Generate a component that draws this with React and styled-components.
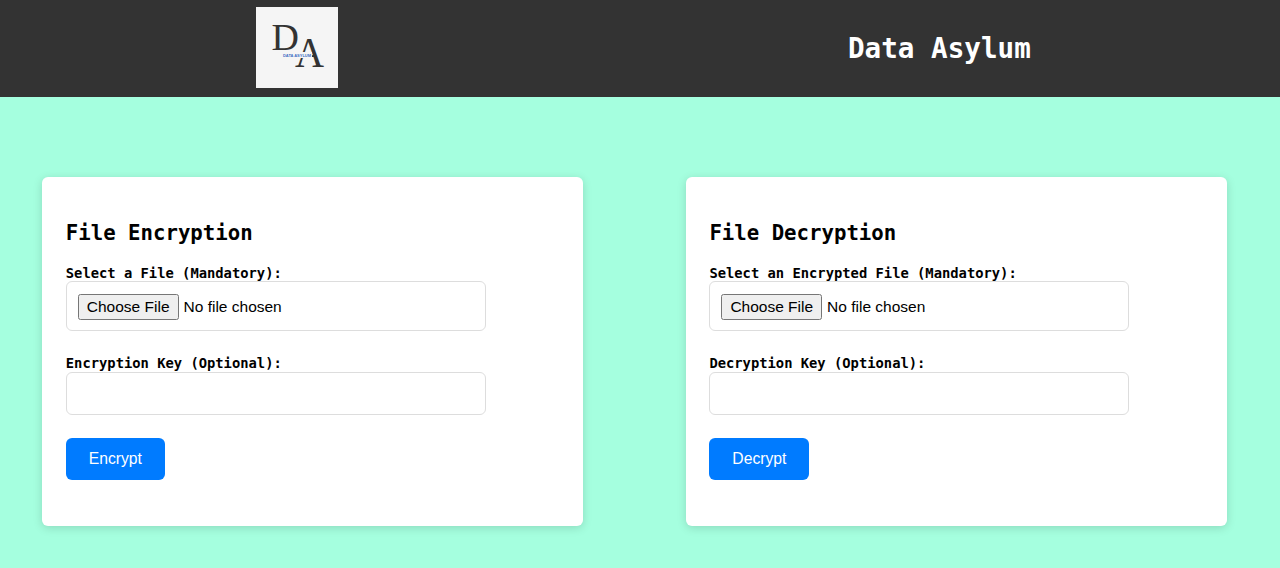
import React from "react";
import styled, { createGlobalStyle } from "styled-components";

const GlobalStyle = createGlobalStyle`
  html, body {
    margin: 0;
    padding: 0;
  }
  body {
    background: #a5ffdf;
    font-family: "Liberation Sans", Arial, sans-serif;
    min-height: 568px;
    overflow: hidden;
  }
`;

const Header = styled.header`
  display: flex;
  align-items: center;
  height: 97px;
  padding-left: 256px;
  background: #333333;
  color: #ffffff;
`;

const Logo = styled.svg`
  display: block;
  width: 82px;
  height: 81px;
  margin-bottom: 2px;
`;

const SiteTitle = styled.h1`
  margin: 0 0 0 510px;
  font-family: "DejaVu Sans Mono", monospace;
  font-size: 27.6px;
  font-weight: 700;
`;

const Main = styled.main`
  display: flex;
  gap: 102.6px;
  padding: 80px 0 0 42px;
`;

const Card = styled.section`
  box-sizing: border-box;
  width: 541px;
  height: 349px;
  padding: 44px 24px 0 23.8px;
  background: #ffffff;
  border-radius: 6px;
  box-shadow: 0 2px 10px rgba(0, 0, 0, 0.15);
`;

const CardTitle = styled.h2`
  margin: 0 0 17px;
  height: 25px;
  line-height: 25px;
  font-family: "DejaVu Sans Mono", monospace;
  font-size: 20.7px;
  font-weight: 700;
  color: #000000;
`;

const Label = styled.label`
  display: block;
  height: 18px;
  line-height: 20px;
  font-family: "DejaVu Sans Mono", monospace;
  font-size: 13.8px;
  font-weight: 700;
  color: #000000;
`;

const FileInput = styled.input`
  display: block;
  box-sizing: border-box;
  width: 420px;
  height: 50px;
  margin: 0 0 22px;
  padding: 12px 11px;
  background: #ffffff;
  border: 1px solid #dddddd;
  border-radius: 6px;
  font-family: "Liberation Sans", Arial, sans-serif;
  font-size: 15.5px;
  color: #000000;

  &::file-selector-button {
    padding: 2px 7px;
    margin-right: 5px;
  }
`;

const KeyInput = styled.input`
  display: block;
  box-sizing: border-box;
  width: 420px;
  height: 43px;
  margin: 1px 0 23px;
  padding: 12px;
  background: #ffffff;
  border: 1px solid #dddddd;
  border-radius: 6px;
  font-size: 16px;
`;

const Submit = styled.button`
  display: block;
  width: ${(p) => p.$width}px;
  height: 42px;
  padding: 0;
  border: none;
  border-radius: 6px;
  background: #007bff;
  color: #ffffff;
  font-family: "Liberation Sans", Arial, sans-serif;
  font-size: 15.7px;
`;

function BrandMark() {
  return (
    <Logo viewBox="0 0 82 81">
      <rect width="82" height="81" fill="#f5f5f5" />
      <text x="15.5" y="43" fontFamily="Liberation Serif, serif" fontSize="38" fill="#333333">
        D
      </text>
      <text
        x="39"
        y="60"
        fontFamily="Liberation Serif, serif"
        fontSize="43"
        fill="#333333"
        textLength="29"
        lengthAdjust="spacingAndGlyphs"
      >
        A
      </text>
      <rect x="26" y="45" width="30" height="6" fill="#f5f5f5" />
      <text
        x="27"
        y="50"
        fontFamily="Liberation Sans, sans-serif"
        fontSize="4.4"
        fontWeight="700"
        fill="#3f6fc4"
        textLength="28"
        lengthAdjust="spacingAndGlyphs"
      >
        DATA ASYLUM
      </text>
    </Logo>
  );
}

function ToolCard({ title, fileLabel, keyLabel, action, actionWidth }) {
  return (
    <Card>
      <CardTitle>{title}</CardTitle>
      <Label>{fileLabel}</Label>
      <FileInput type="file" />
      <Label>{keyLabel}</Label>
      <KeyInput type="text" />
      <Submit type="button" $width={actionWidth}>
        {action}
      </Submit>
    </Card>
  );
}

export default function App() {
  return (
    <>
      <GlobalStyle />
      <Header>
        <BrandMark />
        <SiteTitle>Data Asylum</SiteTitle>
      </Header>
      <Main>
        <ToolCard
          title="File Encryption"
          fileLabel="Select a File (Mandatory):"
          keyLabel="Encryption Key (Optional):"
          action="Encrypt"
          actionWidth={99}
        />
        <ToolCard
          title="File Decryption"
          fileLabel="Select an Encrypted File (Mandatory):"
          keyLabel="Decryption Key (Optional):"
          action="Decrypt"
          actionWidth={100}
        />
      </Main>
    </>
  );
}
